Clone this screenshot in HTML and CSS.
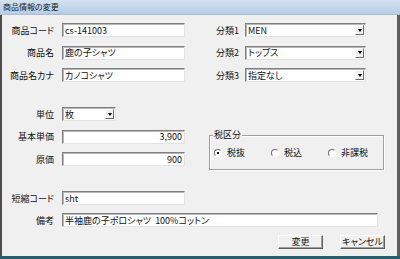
FILE: index.html
```html
<!DOCTYPE html>
<html lang="ja">
<head>
  <meta charset="UTF-8" />
  <title>商品情報の変更</title>
  <link rel="stylesheet" href="styles.css">
</head>
<body>

<div class="window">
  <div class="titlebar">商品情報の変更</div>
  <div class="content">

    <div class="top">
      <div class="row">
        <label class="lbl">商品コード</label>
        <input class="field" type="text" value="cs-141003">
        <label class="lbl2">分類1</label>
        <div class="select wide"><span>MEN</span><span class="arrow"></span></div>
      </div>
      <div class="row">
        <label class="lbl">商品名</label>
        <input class="field" type="text" value="鹿の子シャツ">
        <label class="lbl2">分類2</label>
        <div class="select wide"><span>トップス</span><span class="arrow"></span></div>
      </div>
      <div class="row">
        <label class="lbl">商品名カナ</label>
        <input class="field" type="text" value="カノコシャツ">
        <label class="lbl2">分類3</label>
        <div class="select wide"><span>指定なし</span><span class="arrow"></span></div>
      </div>
    </div>

    <div class="middle">
      <div class="col-left">
        <div class="row">
          <label class="lbl">単位</label>
          <div class="select unit"><span>枚</span><span class="arrow"></span></div>
        </div>
        <div class="row">
          <label class="lbl">基本単価</label>
          <input class="field num" type="text" value="3,900">
        </div>
        <div class="row">
          <label class="lbl">原価</label>
          <input class="field num" type="text" value="900">
        </div>
      </div>
      <div class="group">
        <span class="group-title">税区分</span>
        <div class="radios">
          <span class="radio checked"><i></i>税抜</span>
          <span class="radio"><i></i>税込</span>
          <span class="radio"><i></i>非課税</span>
        </div>
      </div>
    </div>

    <div class="bottom">
      <div class="row">
        <label class="lbl">短縮コード</label>
        <input class="field" type="text" value="sht">
      </div>
      <div class="row">
        <label class="lbl">備考</label>
        <input class="field long" type="text" value="半袖鹿の子ポロシャツ  100%コットン">
      </div>
      <div class="buttons">
        <button>変更</button>
        <button>キャンセル</button>
      </div>
    </div>

  </div>
</div>

</body>
</html>
```

FILE: styles.css
```css
body {
  margin: 0;
  font-family: "Noto Sans CJK JP", "DejaVu Sans", sans-serif;
  font-size: 9px;
  color: #111;
  background: #f0f0f0;
}
.window {
  width: 400px;
  height: 259px;
  box-sizing: border-box;
  background: #f0f0f0;
  border-bottom: 3px solid #245f69;
  display: flex;
  flex-direction: column;
}
.titlebar {
  height: 14px;
  line-height: 14px;
  padding-left: 3px;
  font-size: 8px;
  font-feature-settings: "palt";
  background: linear-gradient(#d3e2f1, #b6cde6);
  border-bottom: 1px solid #a9bfd6;
  color: #1a1a1a;
}
.content {
  flex: 1;
  border-left: 2px solid #4d4d4d;
  border-right: 3px solid #5e5e5e;
  padding-top: 8px;
}
.row {
  display: flex;
  align-items: center;
  height: 14px;
  margin-bottom: 8.5px;
}
.lbl {
  width: 52px;
  margin-right: 8px;
  text-align: right;
  font-feature-settings: "palt";
  white-space: nowrap;
}
.lbl2 {
  width: 25px;
  margin-left: 31px;
  margin-right: 4px;
  white-space: nowrap;
  font-feature-settings: "palt";
}
.field {
  width: 123px;
  height: 14px;
  box-sizing: border-box;
  margin: 0;
  padding: 0 2px;
  border: 1px solid;
  border-color: #7f7f7f #e3e3e3 #e3e3e3 #7f7f7f;
  box-shadow: inset 1px 1px #b9b9b9;
  background: #fff;
  font-family: "Noto Sans CJK JP", "DejaVu Sans", sans-serif;
  font-size: 9px;
  font-feature-settings: "palt";
  color: #111;
  outline: none;
}
.num {
  text-align: right;
}
.long {
  width: 316px;
}
.select {
  display: flex;
  align-items: center;
  justify-content: space-between;
  height: 14px;
  box-sizing: border-box;
  padding-left: 2px;
  border: 1px solid;
  border-color: #7f7f7f #e3e3e3 #e3e3e3 #7f7f7f;
  box-shadow: inset 1px 1px #b9b9b9;
  background: #fff;
  font-feature-settings: "palt";
}
.wide {
  width: 121px;
}
.unit {
  width: 54px;
}
.arrow {
  width: 9px;
  height: 10px;
  box-sizing: border-box;
  margin-right: 1px;
  background: #f0f0f0;
  border: 1px solid;
  border-color: #fff #6b6b6b #6b6b6b #fff;
  display: flex;
  align-items: center;
  justify-content: center;
}
.arrow::after {
  content: "";
  border-left: 2.5px solid transparent;
  border-right: 2.5px solid transparent;
  border-top: 3px solid #000;
}
.middle {
  display: flex;
  margin-top: 25px;
}
.col-left {
  width: 183px;
}
.col-left .row:last-child {
  margin-bottom: 0;
}
.group {
  position: relative;
  width: 175px;
  height: 35px;
  box-sizing: border-box;
  margin-left: 24px;
  margin-top: 28px;
  border: 1px solid #a0a0a0;
  box-shadow: inset 1px 1px #fff, 1px 1px #fff;
}
.group-title {
  position: absolute;
  top: -8px;
  left: 3px;
  padding: 0 1px;
  background: #f0f0f0;
  line-height: 14px;
}
.radios {
  display: grid;
  grid-template-columns: 57px 57px 1fr;
  padding: 11px 0 0 4px;
}
.radio {
  display: flex;
  align-items: center;
  line-height: 12px;
}
.radio i {
  width: 6px;
  height: 6px;
  margin-right: 5px;
  border: 1px solid;
  border-color: #707070 #fff #fff #707070;
  border-radius: 50%;
  background: #fff;
  position: relative;
}
.checked i::after {
  content: "";
  position: absolute;
  left: 2px;
  top: 2px;
  width: 2px;
  height: 2px;
  background: #000;
}
.bottom {
  margin-top: 21px;
}
.bottom .row {
  margin-bottom: 8px;
}
.buttons {
  display: flex;
  justify-content: flex-end;
  gap: 17px;
  margin-right: 12px;
}
button {
  width: 45px;
  height: 14px;
  padding: 0;
  box-sizing: border-box;
  border: 1px solid;
  border-color: #fff #5f5f5f #5f5f5f #fff;
  box-shadow: inset -1px -1px #a0a0a0;
  background: #f0f0f0;
  font-family: "Noto Sans CJK JP", "DejaVu Sans", sans-serif;
  font-size: 9px;
  line-height: 12px;
  white-space: nowrap;
  color: #111;
  font-feature-settings: "palt";
}
```
